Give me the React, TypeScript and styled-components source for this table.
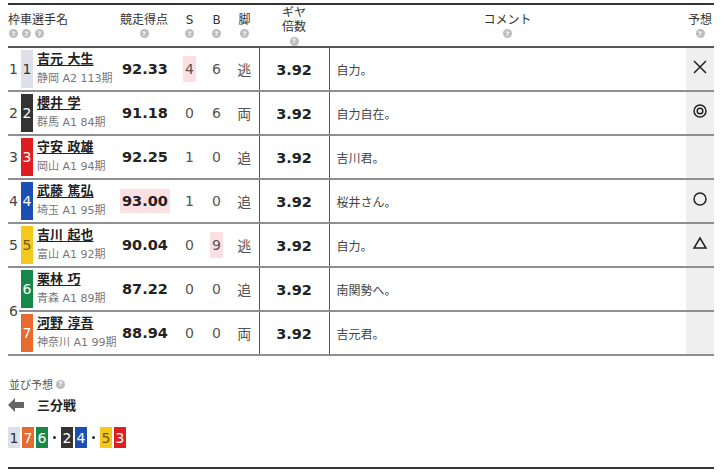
import React from 'react'
import styled, { createGlobalStyle } from 'styled-components'

const GlobalStyle = createGlobalStyle`
  body {
    margin: 0;
    background: #fff;
    font-family: "DejaVu Sans", "Noto Sans CJK JP", sans-serif;
    color: #333;
  }
`

const carColors: Record<number, { bg: string; fg: string }> = {
  1: { bg: '#dde0e8', fg: '#333' },
  2: { bg: '#333333', fg: '#fff' },
  3: { bg: '#df1f1f', fg: '#fff' },
  4: { bg: '#1b4fb3', fg: '#fff' },
  5: { bg: '#f6c81b', fg: '#6b5a1a' },
  6: { bg: '#17874a', fg: '#fff' },
  7: { bg: '#e86a2c', fg: '#fff' },
}

const Page = styled.div`
  width: 706px;
  padding: 3px 0 0 8px;
`

const Table = styled.table`
  width: 706px;
  border-collapse: collapse;
  table-layout: fixed;
  border-top: 2px solid #333;
`

const HeadCell = styled.th<{ $align?: string }>`
  height: 41px;
  padding: 0;
  font-weight: normal;
  font-size: 12px;
  color: #333;
  text-align: ${p => p.$align ?? 'center'};
  vertical-align: middle;
  border-bottom: 2px solid #555;
  line-height: 14px;
`

const HelpRow = styled.div<{ $align?: string }>`
  display: flex;
  gap: 4px;
  justify-content: ${p => p.$align ?? 'center'};
  margin-top: 2px;
`

const Help = styled.span`
  display: inline-flex;
  align-items: center;
  justify-content: center;
  width: 9px;
  height: 9px;
  border-radius: 50%;
  background: #bdbdbd;
  color: #fff;
  font-size: 6px;
  font-weight: bold;
  line-height: 1;
`

const Row = styled.tr`
  height: 44px;
`

const Cell = styled.td<{ $align?: string; $divider?: boolean }>`
  padding: 0;
  height: 42px;
  text-align: ${p => p.$align ?? 'center'};
  vertical-align: middle;
  border-bottom: 2px solid #8f8f8f;
  ${p => (p.$divider ? 'border-left: 1px solid #555; border-right: 1px solid #555;' : '')}
`

const FrameCell = styled(Cell)`
  font-size: 14px;
  color: #444;
  text-align: left;
  padding-left: 1px;
`

const CarBox = styled.div<{ $car: number }>`
  width: 12px;
  height: 38px;
  margin-left: 2px;
  display: flex;
  align-items: center;
  justify-content: center;
  font-size: 14px;
  background: ${p => carColors[p.$car].bg};
  color: ${p => carColors[p.$car].fg};
`

const NameCell = styled(Cell)`
  text-align: left;
  padding-left: 2px;
`

const Name = styled.div`
  font-size: 13px;
  font-weight: bold;
  color: #222;
  text-decoration: underline;
  text-underline-offset: 2px;
  white-space: nowrap;
  line-height: 18px;
  margin-top: -2px;
`

const Info = styled.div`
  font-size: 11px;
  color: #777;
  white-space: nowrap;
  margin-top: 4px;
  line-height: 14px;
`

const Score = styled.span<{ $hot?: boolean }>`
  display: inline-block;
  font-size: 14.5px;
  font-weight: bold;
  color: #222;
  padding: 4px 2px;
  margin-right: 8px;
  background: ${p => (p.$hot ? '#fbdfe2' : 'transparent')};
`

const Stat = styled.span<{ $hot?: boolean }>`
  display: inline-block;
  font-size: 14px;
  color: #555;
  padding: 5px 2px;
  background: ${p => (p.$hot ? '#fbdfe2' : 'transparent')};
`

const Gear = styled.span`
  font-size: 14.5px;
  font-weight: bold;
  color: #222;
`

const Comment = styled(Cell)`
  text-align: left;
  padding-left: 7px;
  font-size: 12px;
  color: #444;
`

const MarkCell = styled(Cell)`
  background: #efefef;
`

const LineupSection = styled.div`
  padding-top: 20px;
`

const LineupLabel = styled.div`
  display: flex;
  align-items: center;
  gap: 3px;
  font-size: 11px;
  color: #555;
  margin-left: 1px;
`

const Formation = styled.div`
  display: flex;
  align-items: center;
  gap: 13px;
  margin-top: 3px;
  font-size: 13px;
  font-weight: bold;
  color: #222;
`

const Chips = styled.div`
  display: flex;
  align-items: center;
  gap: 2px;
  margin-top: 13px;
`

const Chip = styled.span<{ $car: number }>`
  width: 12px;
  height: 21px;
  display: flex;
  align-items: center;
  justify-content: center;
  font-size: 14px;
  background: ${p => carColors[p.$car].bg};
  color: ${p => carColors[p.$car].fg};
`

const Dot = styled.span`
  width: 3px;
  height: 3px;
  border-radius: 50%;
  background: #222;
  margin: 0 3px;
`

const BottomRule = styled.div`
  margin-top: 19px;
  border-top: 2px solid #333;
`

type Mark = 'x' | 'double' | 'circle' | 'triangle' | null

const riders = [
  { frame: 1, car: 1, name: '吉元 大生', info: '静岡 A2 113期', score: '92.33', s: 4, b: 6, leg: '逃', comment: '自力。', mark: 'x' as Mark, hot: 's' },
  { frame: 2, car: 2, name: '櫻井 学', info: '群馬 A1 84期', score: '91.18', s: 0, b: 6, leg: '両', comment: '自力自在。', mark: 'double' as Mark, hot: '' },
  { frame: 3, car: 3, name: '守安 政雄', info: '岡山 A1 94期', score: '92.25', s: 1, b: 0, leg: '追', comment: '吉川君。', mark: null, hot: '' },
  { frame: 4, car: 4, name: '武藤 篤弘', info: '埼玉 A1 95期', score: '93.00', s: 1, b: 0, leg: '追', comment: '桜井さん。', mark: 'circle' as Mark, hot: 'score' },
  { frame: 5, car: 5, name: '吉川 起也', info: '富山 A1 92期', score: '90.04', s: 0, b: 9, leg: '逃', comment: '自力。', mark: 'triangle' as Mark, hot: 'b' },
  { frame: 6, car: 6, name: '栗林 巧', info: '青森 A1 89期', score: '87.22', s: 0, b: 0, leg: '追', comment: '南関勢へ。', mark: null, hot: '' },
  { frame: 6, car: 7, name: '河野 淳吾', info: '神奈川 A1 99期', score: '88.94', s: 0, b: 0, leg: '両', comment: '吉元君。', mark: null, hot: '' },
]

const MarkIcon = ({ mark }: { mark: Mark }) => {
  if (!mark) return null
  return (
    <svg width='16' height='16' viewBox='0 0 16 16' fill='none' stroke='#222' strokeWidth='1.5'>
      {mark === 'x' && <path d='M2 2 L14 14 M14 2 L2 14' />}
      {mark === 'double' && (
        <>
          <circle cx='8' cy='8' r='6' />
          <circle cx='8' cy='8' r='2.8' />
        </>
      )}
      {mark === 'circle' && <circle cx='8' cy='8' r='6' />}
      {mark === 'triangle' && <path d='M8 3 L14 13 L2 13 Z' strokeLinejoin='miter' />}
    </svg>
  )
}

const BackArrow = () => (
  <svg width='16' height='14' viewBox='0 0 16 14'>
    <path d='M0 7 L7 0 L7 4 L16 4 L16 10 L7 10 L7 14 Z' fill='#666' />
  </svg>
)

const lineup: (number | 'dot')[] = [1, 7, 6, 'dot', 2, 4, 'dot', 5, 3]

export default function App() {
  return (
    <Page>
      <GlobalStyle />
      <Table>
        <colgroup>
          <col style={{ width: 11 }} />
          <col style={{ width: 16 }} />
          <col style={{ width: 85 }} />
          <col style={{ width: 56 }} />
          <col style={{ width: 27 }} />
          <col style={{ width: 27 }} />
          <col style={{ width: 29 }} />
          <col style={{ width: 70 }} />
          <col style={{ width: 357 }} />
          <col style={{ width: 28 }} />
        </colgroup>
        <thead>
          <tr>
            <HeadCell colSpan={3} $align='left'>
              枠車選手名
              <HelpRow $align='flex-start' style={{ paddingLeft: 1 }}>
                <Help>?</Help>
                <Help>?</Help>
                <Help>?</Help>
              </HelpRow>
            </HeadCell>
            <HeadCell style={{ paddingRight: 8 }}>
              競走得点
              <HelpRow><Help>?</Help></HelpRow>
            </HeadCell>
            <HeadCell>
              S
              <HelpRow><Help>?</Help></HelpRow>
            </HeadCell>
            <HeadCell>
              B
              <HelpRow><Help>?</Help></HelpRow>
            </HeadCell>
            <HeadCell>
              脚
              <HelpRow><Help>?</Help></HelpRow>
            </HeadCell>
            <HeadCell>
              ギヤ
              <br />
              倍数
              <HelpRow style={{ marginTop: 3 }}><Help>?</Help></HelpRow>
            </HeadCell>
            <HeadCell>
              コメント
              <HelpRow><Help>?</Help></HelpRow>
            </HeadCell>
            <HeadCell>
              予想
              <HelpRow><Help>?</Help></HelpRow>
            </HeadCell>
          </tr>
        </thead>
        <tbody>
          {riders.map(r => (
            <Row key={r.car}>
              {r.car === 6 ? (
                <FrameCell rowSpan={2}>{r.frame}</FrameCell>
              ) : r.car === 7 ? null : (
                <FrameCell>{r.frame}</FrameCell>
              )}
              <Cell>
                <CarBox $car={r.car}>{r.car}</CarBox>
              </Cell>
              <NameCell>
                <Name>{r.name}</Name>
                <Info>{r.info}</Info>
              </NameCell>
              <Cell>
                <Score $hot={r.hot === 'score'}>{r.score}</Score>
              </Cell>
              <Cell>
                <Stat $hot={r.hot === 's'}>{r.s}</Stat>
              </Cell>
              <Cell>
                <Stat $hot={r.hot === 'b'}>{r.b}</Stat>
              </Cell>
              <Cell>
                <Stat>{r.leg}</Stat>
              </Cell>
              <Cell $divider>
                <Gear>3.92</Gear>
              </Cell>
              <Comment>{r.comment}</Comment>
              <MarkCell>
                <MarkIcon mark={r.mark} />
              </MarkCell>
            </Row>
          ))}
        </tbody>
      </Table>
      <LineupSection>
        <LineupLabel>
          並び予想 <Help>?</Help>
        </LineupLabel>
        <Formation>
          <BackArrow />
          三分戦
        </Formation>
        <Chips>
          {lineup.map((c, i) =>
            c === 'dot' ? <Dot key={i} /> : <Chip key={i} $car={c}>{c}</Chip>
          )}
        </Chips>
        <BottomRule />
      </LineupSection>
    </Page>
  )
}
